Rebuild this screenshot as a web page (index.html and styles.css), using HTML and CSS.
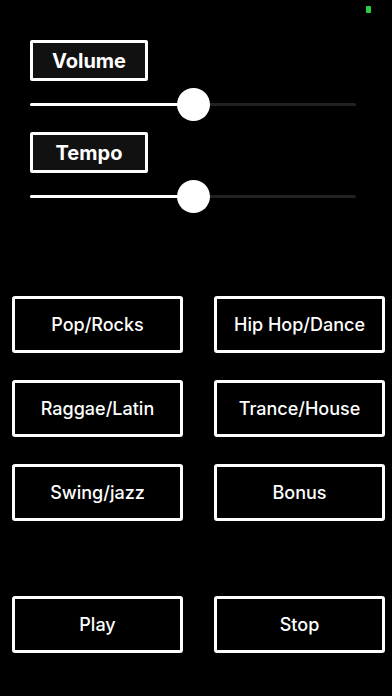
FILE: index.html
```html
<!DOCTYPE html>
<html lang="en">
<head>
    <meta charset="UTF-8">
    <meta name="viewport" content="width=device-width, initial-scale=1.0">
    <title>Beat Player</title>
    <link rel="stylesheet" href="styles.css">
</head>
<body>
    <div class="screen">
        <div class="status-bar">
            <span class="dot"></span>
        </div>

        <div class="controls">
            <div class="label">Volume</div>
            <div class="slider">
                <div class="track"></div>
                <div class="fill" style="width: 50%;"></div>
                <div class="thumb" style="left: 50%;"></div>
            </div>

            <div class="label">Tempo</div>
            <div class="slider">
                <div class="track"></div>
                <div class="fill" style="width: 50%;"></div>
                <div class="thumb" style="left: 50%;"></div>
            </div>
        </div>

        <div class="genres">
            <button class="btn">Pop/Rocks</button>
            <button class="btn">Hip Hop/Dance</button>
            <button class="btn">Raggae/Latin</button>
            <button class="btn">Trance/House</button>
            <button class="btn">Swing/jazz</button>
            <button class="btn">Bonus</button>
        </div>

        <div class="transport">
            <button class="btn">Play</button>
            <button class="btn">Stop</button>
        </div>
    </div>
</body>
</html>
```

FILE: styles.css
```css
body {
    margin: 0;
    background-color: #000;
    color: #fff;
    font-family: Inter, "Liberation Sans", Arial, sans-serif;
}
.screen {
    width: 392px;
    height: 696px;
    overflow: hidden;
}
.status-bar {
    height: 40px;
    position: relative;
}
.dot {
    position: absolute;
    top: 6px;
    left: 366px;
    width: 5px;
    height: 7px;
    background-color: #2ecc40;
    border-radius: 1px;
}
.controls {
    padding: 0 36px 0 30px;
}
.label {
    width: 112px;
    height: 35px;
    border: 3px solid #fff;
    border-radius: 2px;
    background-color: #111;
    font-size: 20px;
    font-weight: 700;
    display: flex;
    align-items: center;
    justify-content: center;
}
.slider {
    position: relative;
    height: 33px;
    margin: 7px 0 11px;
}
.track {
    position: absolute;
    left: 0;
    right: 0;
    top: 15px;
    height: 3px;
    border-radius: 2px;
    background-color: #222;
}
.fill {
    position: absolute;
    left: 0;
    top: 15px;
    height: 3px;
    border-radius: 2px;
    background-color: #fff;
}
.thumb {
    position: absolute;
    top: 0;
    width: 33px;
    height: 33px;
    margin-left: -16px;
    border-radius: 50%;
    background-color: #fff;
}
.genres {
    margin-top: 83px;
    padding: 0 8px 0 12px;
    display: grid;
    grid-template-columns: 171px 171px;
    column-gap: 31px;
    row-gap: 27px;
}
.transport {
    margin-top: 75px;
    padding: 0 8px 0 12px;
    display: grid;
    grid-template-columns: 171px 171px;
    column-gap: 31px;
}
.btn {
    height: 57px;
    border: 3px solid #fff;
    border-radius: 3px;
    background-color: #000;
    color: #fff;
    font-family: Inter, "Liberation Sans", Arial, sans-serif;
    font-size: 18px;
    font-weight: 500;
    padding: 0;
    cursor: pointer;
}
```
